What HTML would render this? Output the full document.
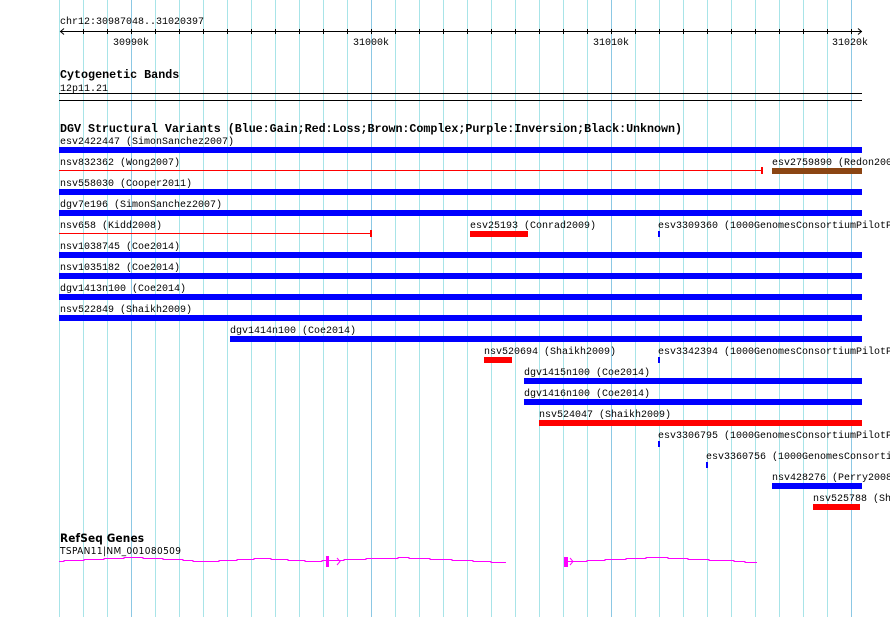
<!DOCTYPE html>
<html><head><style>body{margin:0;background:#fff}svg{display:block}text{font-family:"Liberation Mono",monospace;font-size:10px;fill:#000}.b{font-weight:bold;font-size:11.7px}</style></head>
<body>
<svg width="890" height="617" xmlns="http://www.w3.org/2000/svg">
<g id="grid" stroke-width="1">
<line x1="59.5" y1="0" x2="59.5" y2="617" stroke="#a8e4e8"/>
<line x1="83.5" y1="0" x2="83.5" y2="617" stroke="#a8e4e8"/>
<line x1="107.5" y1="0" x2="107.5" y2="617" stroke="#a8e4e8"/>
<line x1="131.5" y1="0" x2="131.5" y2="617" stroke="#8cc8e4"/>
<line x1="155.5" y1="0" x2="155.5" y2="617" stroke="#a8e4e8"/>
<line x1="179.5" y1="0" x2="179.5" y2="617" stroke="#a8e4e8"/>
<line x1="203.5" y1="0" x2="203.5" y2="617" stroke="#a8e4e8"/>
<line x1="227.5" y1="0" x2="227.5" y2="617" stroke="#a8e4e8"/>
<line x1="251.5" y1="0" x2="251.5" y2="617" stroke="#a8e4e8"/>
<line x1="275.5" y1="0" x2="275.5" y2="617" stroke="#a8e4e8"/>
<line x1="299.5" y1="0" x2="299.5" y2="617" stroke="#a8e4e8"/>
<line x1="323.5" y1="0" x2="323.5" y2="617" stroke="#a8e4e8"/>
<line x1="347.5" y1="0" x2="347.5" y2="617" stroke="#a8e4e8"/>
<line x1="371.5" y1="0" x2="371.5" y2="617" stroke="#8cc8e4"/>
<line x1="395.5" y1="0" x2="395.5" y2="617" stroke="#a8e4e8"/>
<line x1="419.5" y1="0" x2="419.5" y2="617" stroke="#a8e4e8"/>
<line x1="443.5" y1="0" x2="443.5" y2="617" stroke="#a8e4e8"/>
<line x1="467.5" y1="0" x2="467.5" y2="617" stroke="#a8e4e8"/>
<line x1="491.5" y1="0" x2="491.5" y2="617" stroke="#a8e4e8"/>
<line x1="515.5" y1="0" x2="515.5" y2="617" stroke="#a8e4e8"/>
<line x1="539.5" y1="0" x2="539.5" y2="617" stroke="#a8e4e8"/>
<line x1="563.5" y1="0" x2="563.5" y2="617" stroke="#a8e4e8"/>
<line x1="587.5" y1="0" x2="587.5" y2="617" stroke="#a8e4e8"/>
<line x1="611.5" y1="0" x2="611.5" y2="617" stroke="#8cc8e4"/>
<line x1="635.5" y1="0" x2="635.5" y2="617" stroke="#a8e4e8"/>
<line x1="659.5" y1="0" x2="659.5" y2="617" stroke="#a8e4e8"/>
<line x1="683.5" y1="0" x2="683.5" y2="617" stroke="#a8e4e8"/>
<line x1="707.5" y1="0" x2="707.5" y2="617" stroke="#a8e4e8"/>
<line x1="731.5" y1="0" x2="731.5" y2="617" stroke="#a8e4e8"/>
<line x1="755.5" y1="0" x2="755.5" y2="617" stroke="#a8e4e8"/>
<line x1="779.5" y1="0" x2="779.5" y2="617" stroke="#a8e4e8"/>
<line x1="803.5" y1="0" x2="803.5" y2="617" stroke="#a8e4e8"/>
<line x1="827.5" y1="0" x2="827.5" y2="617" stroke="#a8e4e8"/>
<line x1="851.5" y1="0" x2="851.5" y2="617" stroke="#8cc8e4"/>
</g>
<text x="60" y="24">chr12:30987048..31020397</text>
<g stroke="#000" fill="none">
<line x1="60" y1="31.5" x2="862" y2="31.5"/>
<path d="M64 28.5 L60.5 31.5 L64 34.5 M858 28.5 L861.5 31.5 L858 34.5"/>
<path d="M83.5 29v5M107.5 29v5M131.5 29v5M155.5 29v5M179.5 29v5M203.5 29v5M227.5 29v5M251.5 29v5M275.5 29v5M299.5 29v5M323.5 29v5M347.5 29v5M371.5 29v5M395.5 29v5M419.5 29v5M443.5 29v5M467.5 29v5M491.5 29v5M515.5 29v5M539.5 29v5M563.5 29v5M587.5 29v5M611.5 29v5M635.5 29v5M659.5 29v5M683.5 29v5M707.5 29v5M731.5 29v5M755.5 29v5M779.5 29v5M803.5 29v5M827.5 29v5M851.5 29v5"/>
</g>
<text x="113" y="45">30990k</text><text x="353" y="45">31000k</text><text x="593" y="45">31010k</text><text x="832" y="45">31020k</text>
<text class="b" x="60" y="78">Cytogenetic Bands</text>
<text x="60" y="91">12p11.21</text>
<rect x="59" y="93" width="803" height="1"/><rect x="59" y="100" width="803" height="1"/>
<text class="b" x="60" y="132" textLength="622">DGV Structural Variants (Blue:Gain;Red:Loss;Brown:Complex;Purple:Inversion;Black:Unknown)</text>
<g fill="#0000ff">
<rect x="59" y="147" width="803" height="6"/>
<rect x="59" y="189" width="803" height="6"/>
<rect x="59" y="210" width="803" height="6"/>
<rect x="59" y="252" width="803" height="6"/>
<rect x="59" y="273" width="803" height="6"/>
<rect x="59" y="294" width="803" height="6"/>
<rect x="59" y="315" width="803" height="6"/>
<rect x="230" y="336" width="632" height="6"/>
<rect x="524" y="378" width="338" height="6"/>
<rect x="524" y="399" width="338" height="6"/>
<rect x="772" y="483" width="90" height="6"/>
<rect x="658" y="231" width="2" height="6"/>
<rect x="658" y="357" width="2" height="6"/>
<rect x="658" y="441" width="2" height="6"/>
<rect x="706" y="462" width="2" height="6"/>
</g>
<g fill="#ff0000">
<rect x="59" y="170" width="703" height="1"/><rect x="761" y="167" width="2" height="7"/>
<rect x="59" y="233" width="312" height="1"/><rect x="370" y="230" width="2" height="7"/>
<rect x="470" y="231" width="58" height="6"/>
<rect x="484" y="357" width="28" height="6"/>
<rect x="539" y="420" width="323" height="6"/>
<rect x="813" y="504" width="47" height="6"/>
</g>
<rect x="772" y="168" width="90" height="6" fill="#8b4513"/>
<text x="60" y="144">esv2422447 (SimonSanchez2007)</text>
<text x="60" y="165">nsv832362 (Wong2007)</text>
<text x="772" y="165">esv2759890 (Redon2006)</text>
<text x="60" y="186">nsv558030 (Cooper2011)</text>
<text x="60" y="207">dgv7e196 (SimonSanchez2007)</text>
<text x="60" y="228">nsv658 (Kidd2008)</text>
<text x="470" y="228">esv25193 (Conrad2009)</text>
<text x="658" y="228">esv3309360 (1000GenomesConsortiumPilotProject2010)</text>
<text x="60" y="249">nsv1038745 (Coe2014)</text>
<text x="60" y="270">nsv1035182 (Coe2014)</text>
<text x="60" y="291">dgv1413n100 (Coe2014)</text>
<text x="60" y="312">nsv522849 (Shaikh2009)</text>
<text x="230" y="333">dgv1414n100 (Coe2014)</text>
<text x="484" y="354">nsv520694 (Shaikh2009)</text>
<text x="658" y="354">esv3342394 (1000GenomesConsortiumPilotProject2010)</text>
<text x="524" y="375">dgv1415n100 (Coe2014)</text>
<text x="524" y="396">dgv1416n100 (Coe2014)</text>
<text x="539" y="417">nsv524047 (Shaikh2009)</text>
<text x="658" y="438">esv3306795 (1000GenomesConsortiumPilotProject2010)</text>
<text x="706" y="459">esv3360756 (1000GenomesConsortiumPilotProject2010)</text>
<text x="772" y="480">nsv428276 (Perry2008)</text>
<text x="813" y="501">nsv525788 (Shaikh2009)</text>
<text class="b" x="60" y="542" textLength="84" style="font-family:'DejaVu Sans Condensed','Liberation Sans',sans-serif">RefSeq Genes</text>
<text x="60" y="554" textLength="121" style="font-family:'DejaVu Sans Condensed','Liberation Sans',sans-serif">TSPAN11|NM_001080509</text>
<g stroke="#ff00ff" fill="none" stroke-width="1">
<path d="M35 561.5 M59 561.5H64V560.5H84V559.5H104V558.5H124V557.5H143V558.5H163V559.5H183V560.5H193V561.5H219V560.5H237V559.5H254V558.5H271V559.5H288V560.5H305V561.5H322V560.5H344V559.5H366V558.5H398V557.5H409V558.5H430V559.5H452V560.5H473V561.5H491V562.5H506"/>
<path d="M337 558l3 3.5l-3 3.5"/>
</g>
<rect x="326" y="556" width="3" height="11" fill="#ff00ff"/>
<rect x="564" y="557" width="4" height="10" fill="#ff00ff"/>
<path d="M568 561.5H587V560.5H605V559.5H626V558.5H646V557.5H668V558.5H688V559.5H709V560.5H734V561.5H745V562.5H757" stroke="#ff00ff" fill="none"/>
<path d="M570 558l3 3.5l-3 3.5" stroke="#ff00ff" fill="none"/>
</svg>
</body></html>
